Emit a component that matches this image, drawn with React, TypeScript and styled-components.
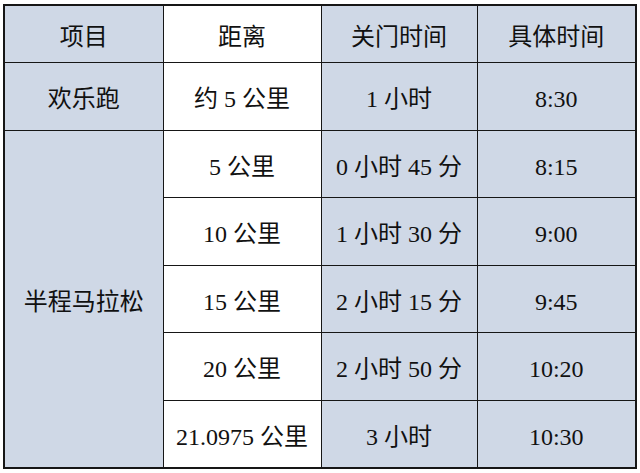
import styled, { createGlobalStyle } from "styled-components";

const GlobalStyle = createGlobalStyle`
  html, body {
    margin: 0;
    padding: 0;
    background: #ffffff;
  }
`;

const Page = styled.div`
  padding: 4px 0 0 3px;
`;

const Table = styled.table`
  border-collapse: collapse;
  table-layout: fixed;
  width: 632px;
  border: 2px solid #161616;
  font-family: "Liberation Serif", "Noto Sans CJK SC", serif;
  font-size: 24px;
  color: #111;
`;

const Row = styled.tr<{ $h: number }>`
  height: ${(p) => p.$h}px;
`;

const Cell = styled.td<{ $shade?: boolean }>`
  border: 1px solid #161616;
  background: ${(p) => (p.$shade ? "#cfd8e6" : "#ffffff")};
  text-align: center;
  vertical-align: middle;
  padding: 6px 0 0 0;
  line-height: 1;
`;

const Head = styled(Cell).attrs({ as: "th" })`
  font-weight: normal;
`;

const rows = [
  { d: "5 公里", c: "0 小时 45 分", t: "8:15" },
  { d: "10 公里", c: "1 小时 30 分", t: "9:00" },
  { d: "15 公里", c: "2 小时 15 分", t: "9:45" },
  { d: "20 公里", c: "2 小时 50 分", t: "10:20" },
  { d: "21.0975 公里", c: "3 小时", t: "10:30" },
];

const heights = [67, 68, 67, 68, 68];

export default function App() {
  return (
    <Page>
      <GlobalStyle />
      <Table>
        <colgroup>
          <col style={{ width: 159 }} />
          <col style={{ width: 158 }} />
          <col style={{ width: 156 }} />
          <col style={{ width: 159 }} />
        </colgroup>
        <thead>
          <Row $h={57}>
            <Head $shade>项目</Head>
            <Head>距离</Head>
            <Head $shade>关门时间</Head>
            <Head $shade>具体时间</Head>
          </Row>
        </thead>
        <tbody>
          <Row $h={68}>
            <Cell $shade>欢乐跑</Cell>
            <Cell>约 5 公里</Cell>
            <Cell $shade>1 小时</Cell>
            <Cell $shade>8:30</Cell>
          </Row>
          {rows.map((r, i) => (
            <Row $h={heights[i]} key={r.d}>
              {i === 0 && (
                <Cell $shade rowSpan={rows.length}>
                  半程马拉松
                </Cell>
              )}
              <Cell>{r.d}</Cell>
              <Cell $shade>{r.c}</Cell>
              <Cell $shade>{r.t}</Cell>
            </Row>
          ))}
        </tbody>
      </Table>
    </Page>
  );
}
